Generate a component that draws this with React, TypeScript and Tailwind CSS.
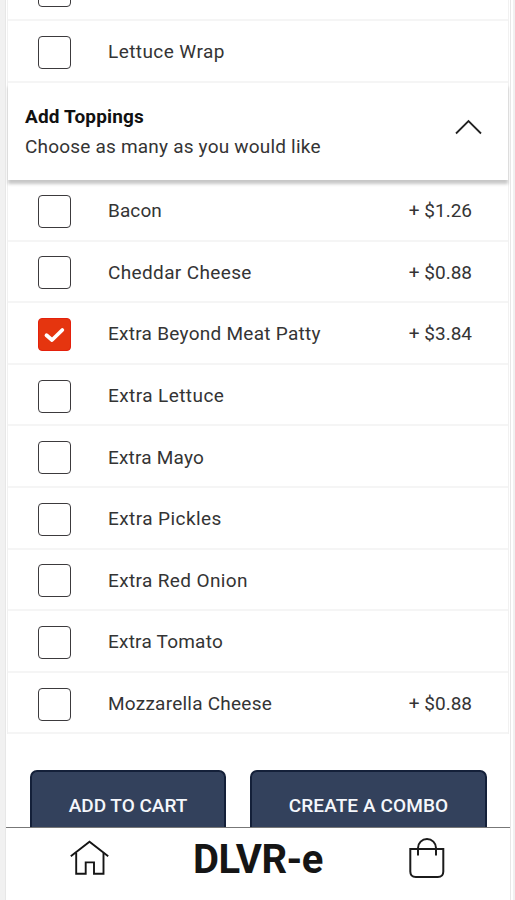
import { FC } from "react"
import clsx from "clsx"

interface IOption {
  title: string
  price?: string
  checked?: boolean
  spacing: string
}

const toppings: IOption[] = [
  { title: "Bacon", price: "+ $1.26", spacing: "tracking-[0.1px]" },
  { title: "Cheddar Cheese", price: "+ $0.88", spacing: "tracking-[0.36px]" },
  { title: "Extra Beyond Meat Patty", price: "+ $3.84", checked: true, spacing: "tracking-[0.27px]" },
  { title: "Extra Lettuce", spacing: "tracking-[0.42px]" },
  { title: "Extra Mayo", spacing: "tracking-[0.2px]" },
  { title: "Extra Pickles", spacing: "tracking-[0.42px]" },
  { title: "Extra Red Onion", spacing: "tracking-[0.37px]" },
  { title: "Extra Tomato", spacing: "tracking-[0.22px]" },
  { title: "Mozzarella Cheese", price: "+ $0.88", spacing: "tracking-[0.24px]" },
]

const Checkbox: FC<{ checked?: boolean }> = ({ checked }) => (
  <span
    className={clsx(
      "flex h-[33px] w-[33px] shrink-0 items-center justify-center rounded-[4px] border",
      checked ? "border-[#e4200c] bg-[#e5350f]" : "border-[#3c3a3d] bg-white"
    )}
  >
    {checked && (
      <svg width="31" height="31" viewBox="0 0 31 31" fill="none">
        <path
          d="M7.5 16.2L13 21L23.3 11"
          stroke="white"
          strokeWidth="3.8"
          strokeLinecap="round"
          strokeLinejoin="round"
        />
      </svg>
    )}
  </span>
)

const OptionRow: FC<IOption> = ({ title, price, checked, spacing }) => (
  <li className="flex h-[61.6px] items-center border-b-2 border-[#f5f5f5] pl-[30px] pr-[36px] pt-[3px]">
    <Checkbox checked={checked} />
    <span className={clsx("ml-[37px] flex-1 whitespace-nowrap", spacing)}>{title}</span>
    {price && <span className="whitespace-nowrap">{price}</span>}
  </li>
)

const HomeIcon: FC = () => (
  <svg width="40" height="38" viewBox="0 0 40 38" fill="none" stroke="#151515" strokeWidth="1.9">
    <path d="M0.8 18.2L19.5 3.8L38.2 18.2" />
    <path d="M6.2 15V35.7H15.7V24.4H24V35.7H33.5V15" />
  </svg>
)

const BagIcon: FC = () => (
  <svg width="36" height="42" viewBox="0 0 36 42" fill="none" stroke="#1b1b1b" strokeWidth="2">
    <path d="M1.3 12H34.3V34.5Q34.3 40 28.8 40H6.8Q1.3 40 1.3 34.5Z" />
    <path d="M9 18.5V11A9 9 0 0 1 27 11V18.5" />
  </svg>
)

const App: FC = () => {
  return (
    <div className="flex h-[900px] w-[515px] bg-[#f1f1f1] font-['Roboto',sans-serif] text-[19px] leading-[30px] text-[#343434]">
      <main className="ml-[5px] flex w-[506px] flex-col overflow-hidden border-x border-[#e7e7e7] bg-white">
        <div className="flex h-[827px] flex-col overflow-hidden">
          <section className="mx-px border-x border-[#f1f1f1]">
            <ul className="h-[83px]">
              <li className="flex h-[21px] items-end border-b-2 border-[#f5f5f5] pb-[12px] pl-[30px]">
                <Checkbox />
              </li>
              <OptionRow title="Lettuce Wrap" spacing="tracking-[0.42px]" />
            </ul>
            <div className="relative flex h-[97px] items-center justify-between bg-white pl-[17px] pr-[26px] shadow-[0_4px_3px_rgba(0,0,0,0.22)]">
              <div className="mt-px">
                <h2 className="font-bold text-[#111111] tracking-[0.17px]">Add Toppings</h2>
                <p className="tracking-[0.2px]">Choose as many as you would like</p>
              </div>
              <svg
                className="-mt-[10px]"
                width="28"
                height="16"
                viewBox="0 0 28 16"
                fill="none"
                stroke="#222222"
                strokeWidth="1.8"
              >
                <path d="M2 14.5L14.5 2L27 14.5" />
              </svg>
            </div>
            <ul>
              {toppings.map((topping) => (
                <OptionRow key={topping.title} {...topping} />
              ))}
            </ul>
          </section>
          <div className="mt-[36px] flex gap-[24px] pl-[24px] text-[19px] font-medium text-[#f5f7fb]">
            <button className="h-[72px] w-[196px] rounded-[7px] border-2 border-[#142039] bg-[#33415c]">
              ADD TO CART
            </button>
            <button className="h-[72px] w-[237px] rounded-[7px] border-2 border-[#142039] bg-[#33415c] tracking-[0.1px]">
              CREATE A COMBO
            </button>
          </div>
        </div>
        <nav className="flex h-[73px] items-start border-t border-[#777777] bg-white pl-[64px]">
          <div className="mt-[10px]">
            <HomeIcon />
          </div>
          <span className="ml-[83px] mt-[12px] w-[132px] whitespace-nowrap text-[40px] font-bold leading-[40px] tracking-[-0.5px] text-[#151515]">
            DLVR-e
          </span>
          <div className="ml-[84px] mt-[9px]">
            <BagIcon />
          </div>
        </nav>
      </main>
      <div className="w-[2px] bg-white" />
    </div>
  )
}

export default App
